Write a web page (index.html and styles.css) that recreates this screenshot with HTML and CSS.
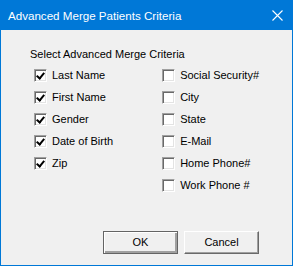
FILE: index.html
```html
<!DOCTYPE html>
<html lang="en">
<head>
	<meta charset="UTF-8">
	<title>Advanced Merge Patients Criteria</title>
	<link rel="stylesheet" href="styles.css">
</head>
<body>
    <div class="dialog">
        <div class="titlebar">
            <span class="title">Advanced Merge Patients Criteria</span>
            <svg class="close" width="11" height="11" viewBox="0 0 11 11">
                <path d="M0.5 0.5 L10.5 10.5 M10.5 0.5 L0.5 10.5" stroke="#fff" stroke-width="1.1" fill="none"/>
            </svg>
        </div>
        <div class="content">
            <div class="caption">Select Advanced Merge Criteria</div>
            <div class="columns">
                <ul class="col">
                    <li><span class="box checked"></span>Last Name</li>
                    <li><span class="box checked"></span>First Name</li>
                    <li><span class="box checked"></span>Gender</li>
                    <li><span class="box checked"></span>Date of Birth</li>
                    <li><span class="box checked"></span>Zip</li>
                </ul>
                <ul class="col">
                    <li><span class="box"></span>Social Security#</li>
                    <li><span class="box"></span>City</li>
                    <li><span class="box"></span>State</li>
                    <li><span class="box"></span>E-Mail</li>
                    <li><span class="box"></span>Home Phone#</li>
                    <li><span class="box"></span>Work Phone #</li>
                </ul>
            </div>
            <div class="buttons">
                <div class="btn default">OK</div>
                <div class="btn">Cancel</div>
            </div>
        </div>
    </div>
</body>
</html>
```
FILE: styles.css
```css
* {
	padding: 0px;
	margin: 0px;
	list-style: none;
	box-sizing: border-box;
}
body {
	font-family: "Liberation Sans", Arial, sans-serif;
	font-size: 11px;
	color: #000;
}
.dialog {
	width: 293px;
	height: 266px;
	border: 1px solid #0078d7;
	border-top: none;
	background: #f0f0f0;
	display: flex;
	flex-direction: column;
}
.titlebar {
	height: 30px;
	background: #0078d7;
	display: flex;
	align-items: center;
	justify-content: space-between;
	padding: 0 10px 0 8px;
	margin: 0 -1px;
}
.title {
	color: #fff;
	font-size: 11.6px;
	line-height: 14px;
	margin-top: 1px;
}
.close {
	display: block;
	margin-top: 1px;
}
.content {
	flex: 1;
	padding: 18px 33px 0 29px;
}
.caption {
	line-height: 13px;
}
.columns {
	display: flex;
	margin: 8px 0 0 4px;
}
.col {
	display: flex;
	flex-direction: column;
	gap: 9px;
}
.col:first-child {
	width: 132px;
}
.col li {
	display: flex;
	align-items: center;
	height: 13px;
	line-height: 13px;
	white-space: nowrap;
}
.box {
	position: relative;
	width: 13px;
	height: 13px;
	margin-right: 5px;
	background: #fff;
	border: 1px solid;
	border-color: #a0a0a0 #fff #fff #a0a0a0;
	box-shadow: inset 1px 1px #696969, inset -1px -1px #e3e3e3;
}
.box.checked::after {
	content: "";
	position: absolute;
	left: 3px;
	top: 1px;
	width: 3px;
	height: 6px;
	border: solid #000;
	border-width: 0 2px 2px 0;
	transform: rotate(40deg);
}
.buttons {
	display: flex;
	justify-content: flex-end;
	gap: 6px;
	margin-top: 39px;
}
.btn {
	width: 75px;
	height: 23px;
	line-height: 21px;
	text-align: center;
	background: #f0f0f0;
	border: 1px solid;
	border-color: #fff #696969 #696969 #fff;
	box-shadow: inset -1px -1px #a0a0a0;
}
.btn.default {
	border-color: #646464;
	box-shadow: inset 1px 1px #fff, inset -2px -2px #a0a0a0;
}
```
